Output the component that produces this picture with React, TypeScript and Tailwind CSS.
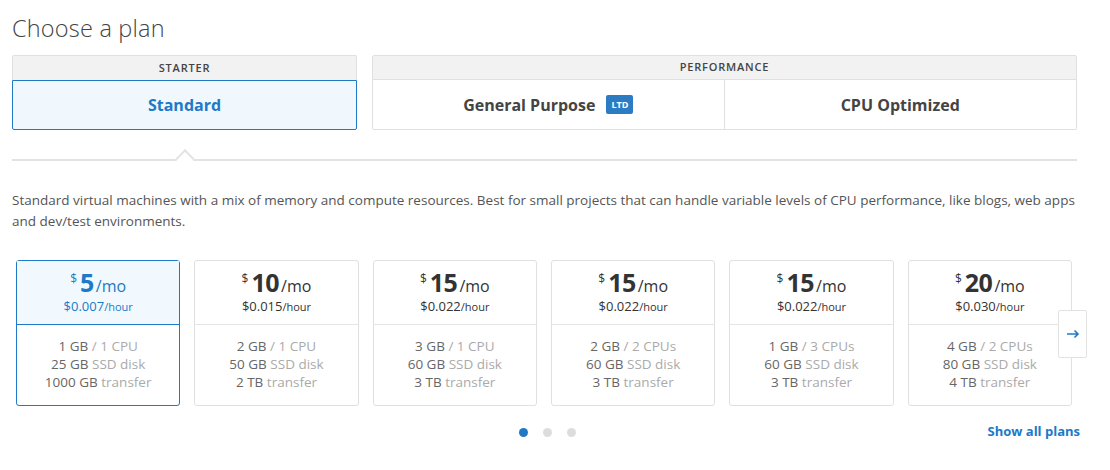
import React from 'react';

type Plan = {
  price: string;
  hourly: string;
  mem: string;
  cpu: string;
  disk: string;
  transfer: string;
};

const plans: Plan[] = [
  { price: '5', hourly: '$0.007', mem: '1 GB', cpu: '1 CPU', disk: '25 GB', transfer: '1000 GB' },
  { price: '10', hourly: '$0.015', mem: '2 GB', cpu: '1 CPU', disk: '50 GB', transfer: '2 TB' },
  { price: '15', hourly: '$0.022', mem: '3 GB', cpu: '1 CPU', disk: '60 GB', transfer: '3 TB' },
  { price: '15', hourly: '$0.022', mem: '2 GB', cpu: '2 CPUs', disk: '60 GB', transfer: '3 TB' },
  { price: '15', hourly: '$0.022', mem: '1 GB', cpu: '3 CPUs', disk: '60 GB', transfer: '3 TB' },
  { price: '20', hourly: '$0.030', mem: '4 GB', cpu: '2 CPUs', disk: '80 GB', transfer: '4 TB' },
];

const PlanCard: React.FC<{ plan: Plan; selected?: boolean }> = ({ plan, selected }) => {
  const tone = selected ? 'text-[#2079c7]' : 'text-[#333]';
  return (
    <div
      className={`h-[146px] rounded-[3px] border ${
        selected ? 'border-[#2079c7]' : 'border-[#e0e0e0]'
      } bg-white flex flex-col`}
    >
      {/* price */}
      <div
        className={`h-[64px] flex flex-col items-center justify-center border-b ${
          selected ? 'border-[#2079c7] bg-[#f2f9fe]' : 'border-[#e5e5e5]'
        } ${tone}`}
      >
        <div className="flex items-start leading-none -mt-[2px]">
          <span className="text-[12px] mt-[3px] mr-[3px]">$</span>
          <span className="text-[25px] font-bold tracking-[-0.5px]">{plan.price}</span>
          <span className="text-[16px] mt-[8px] ml-[2px]">/mo</span>
        </div>
        <div className="leading-none mt-[2px]">
          <span className="text-[13px]">{plan.hourly}</span>
          <span className="text-[11px]">/hour</span>
        </div>
      </div>
      {/* specs */}
      <div className="flex-1 flex flex-col items-center justify-center text-[13.5px] leading-[18px] text-[#666] pb-[2px]">
        <div>
          {plan.mem} <span className="text-[#aaa]">/ {plan.cpu}</span>
        </div>
        <div>
          {plan.disk} <span className="text-[#aaa]">SSD disk</span>
        </div>
        <div>
          {plan.transfer} <span className="text-[#aaa]">transfer</span>
        </div>
      </div>
    </div>
  );
};

export default function App() {
  return (
    <div className="w-[1110px] h-[470px] bg-white font-['Open_Sans',sans-serif] text-[#444] px-[12px] pt-[12px]">
      <h1 className="text-[23.5px] leading-[32px] font-light text-[#444] tracking-[0.2px]">Choose a plan</h1>

      {/* Tabs */}
      <div className="flex gap-[15px] mt-[11px] w-[1065px]">
        <div className="w-[345px]">
          <div className="h-[25px] bg-[#f2f2f2] border border-b-0 border-[#e0e0e0] rounded-t-[2px] flex items-center justify-center text-[11px] font-semibold tracking-[0.8px] text-[#444]">
            STARTER
          </div>
          <div className="h-[50px] border border-[#2079c7] bg-[#f0f8fe] rounded-b-[2px] flex items-center justify-center text-[16px] font-bold text-[#2079c7]">
            Standard
          </div>
        </div>
        <div className="flex-1">
          <div className="h-[25px] bg-[#f2f2f2] border border-[#e0e0e0] rounded-t-[2px] flex items-center justify-center text-[11px] font-semibold tracking-[0.8px] text-[#444]">
            PERFORMANCE
          </div>
          <div className="h-[50px] grid grid-cols-2 border border-t-0 border-[#e0e0e0] rounded-b-[2px]">
            <div className="flex items-center justify-center gap-[11px] border-r border-[#e0e0e0] text-[16px] font-bold text-[#444]">
              General Purpose
              <span className="h-[19px] px-[5px] bg-[#2c7cc4] rounded-[2px] text-white text-[9px] font-bold flex items-center">
                LTD
              </span>
            </div>
            <div className="flex items-center justify-center text-[16px] font-bold text-[#444]">CPU Optimized</div>
          </div>
        </div>
      </div>

      {/* Divider with caret */}
      <div className="relative mt-[29px] w-[1065px] h-[2px] bg-[#e3e3e3]">
        <div className="absolute left-[166px] -top-[7px] w-[14px] h-[14px] rotate-45 bg-white border-l-2 border-t-2 border-[#e3e3e3]" />
      </div>

      <p className="mt-[29px] w-[1068px] text-[13.5px] leading-[21px] text-[#555]">
        Standard virtual machines with a mix of memory and compute resources. Best for small projects that can handle variable
        levels of CPU performance, like blogs, web apps and dev/test environments.
      </p>

      {/* Plans */}
      <div className="relative mt-[28px] pl-[4px] w-[1060px]">
        <div className="grid grid-cols-6 gap-[14px]">
          {plans.map((p, i) => (
            <PlanCard key={i} plan={p} selected={i === 0} />
          ))}
        </div>
        <button className="absolute left-[1046px] top-[50px] w-[29px] h-[48px] bg-white border border-[#e2e2e2] rounded-[2px] flex items-center justify-center text-[#2079c7]">
          <svg width="14" height="10" viewBox="0 0 14 10" fill="none" stroke="currentColor" strokeWidth="1.6">
            <path d="M1 5h11M8.5 1.5L12 5l-3.5 3.5" />
          </svg>
        </button>
      </div>

      {/* Pager */}
      <div className="relative mt-[17px] w-[1068px] h-[18px] flex items-center justify-center">
        <div className="flex gap-[15px] ml-[2px]">
          <span className="w-[9px] h-[9px] rounded-full bg-[#2079c7]" />
          <span className="w-[9px] h-[9px] rounded-full bg-[#ddd]" />
          <span className="w-[9px] h-[9px] rounded-full bg-[#ddd]" />
        </div>
        <a className="absolute right-0 text-[13px] font-bold text-[#2079c7]">Show all plans</a>
      </div>
    </div>
  );
}
